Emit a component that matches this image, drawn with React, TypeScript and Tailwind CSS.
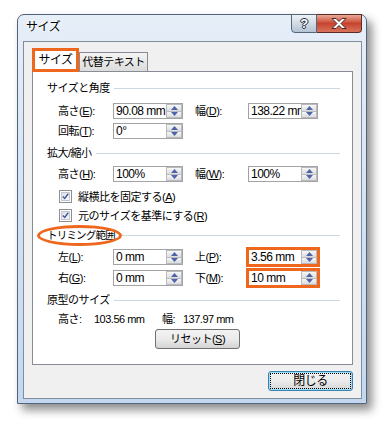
import React from 'react';

const Arrow = ({ up }: { up?: boolean }) => (
  <svg width="7" height="4" viewBox="0 0 7 4">
    <path d={up ? 'M0 4 L3.5 0 L7 4Z' : 'M0 0 L3.5 4 L7 0Z'} fill="#4f64a8" />
  </svg>
);

const Spinner = () => (
  <div className="flex h-full w-[16px] flex-col">
    <div className="flex flex-1 items-center justify-center border border-[#b8bcc2] bg-gradient-to-b from-[#f7f7f7] to-[#dcdcdc]">
      <Arrow up />
    </div>
    <div className="flex flex-1 items-center justify-center border border-t-0 border-[#b8bcc2] bg-gradient-to-b from-[#f7f7f7] to-[#dcdcdc]">
      <Arrow />
    </div>
  </div>
);

const NumBox = ({ value, highlight }: { value: string; highlight?: boolean }) => (
  <div
    className={`flex h-[16px] w-[70px] border border-[#a3a3a3] bg-white ${
      highlight ? 'outline-[3px] outline-solid outline-[#ef671c] -outline-offset-1' : ''
    }`}
  >
    <span className="flex-1 overflow-hidden whitespace-nowrap pl-[2px] text-[12px] leading-[14px]">{value}</span>
    <Spinner />
  </div>
);

const GroupHeader = ({
  title,
  children,
  titleClass = ''
}: {
  title: string;
  children?: React.ReactNode;
  titleClass?: string;
}) => (
  <div className="relative flex h-[14px] items-center pl-[14px] pr-[12px]">
    <span className={`whitespace-nowrap leading-[14px] ${titleClass}`}>{title}</span>
    <div className="ml-[4px] h-px flex-1 bg-[#cdd8e3]" />
    {children}
  </div>
);

const Row = ({
  l1,
  v1,
  l2,
  v2,
  hl,
  className = ''
}: {
  l1: React.ReactNode;
  v1: string;
  l2?: React.ReactNode;
  v2?: string;
  hl?: boolean;
  className?: string;
}) => (
  <div className={`flex h-[16px] items-center pl-[25px] ${className}`}>
    <span className="w-[55px] whitespace-nowrap leading-[14px]">{l1}</span>
    <NumBox value={v1} />
    {l2 && (
      <>
        <span className="ml-[12px] w-[53px] whitespace-nowrap leading-[14px]">{l2}</span>
        <NumBox value={v2 || ''} highlight={hl} />
      </>
    )}
  </div>
);

const Check = ({ children, className = '' }: { children: React.ReactNode; className?: string }) => (
  <div className={`flex h-[13px] items-center pl-[26px] ${className}`}>
    <div className="flex h-[13px] w-[13px] items-center justify-center border border-[#8e8f8f] bg-white">
      <div className="flex h-[9px] w-[9px] items-center justify-center border border-[#c5c9cf] bg-gradient-to-br from-[#dcdfe4] to-[#fbfbfb]">
        <svg width="9" height="9" viewBox="0 0 9 9">
          <path d="M1 4.5 L3.5 7 L8 1" stroke="#3f58a0" strokeWidth="1.8" fill="none" />
        </svg>
      </div>
    </div>
    <span className="ml-[6px] whitespace-nowrap leading-[14px]">{children}</span>
  </div>
);

export default function App() {
  return (
    <div className="min-h-[423px] w-[384px] bg-white pl-[17px] pt-[14px] font-['Liberation_Sans','Noto_Sans_CJK_JP',sans-serif] text-[11px] tracking-[-0.5px] text-black">
      <div className="flex h-[390px] w-[350px] flex-col rounded-t-[7px] border border-[#52637a] bg-gradient-to-b from-[#e6eef8] via-[#d3e2f3] to-[#c3d8f0] shadow-[5px_6px_10px_rgba(0,0,0,0.45)]">
        {/* タイトルバー */}
        <div className="flex h-[26px] items-start justify-between">
          <span className="pl-[8px] pt-[5px] text-[12px] leading-[14px] [text-shadow:0_0_6px_#fff,0_0_3px_#fff]">サイズ</span>
          <div className="-mt-px mr-[4px] flex h-[19px]">
            <div className="flex w-[26px] items-center justify-center rounded-bl-[4px] border border-[#55667b] bg-gradient-to-b from-[#eef2f7] via-[#d2dbe5] to-[#b4c3d4] text-[13px] font-bold leading-none text-white [text-shadow:0_0_1px_#253040,1px_0_0_#253040,-1px_0_0_#253040,0_1px_0_#253040,0_-1px_0_#253040]">
              ?
            </div>
            <div className="flex w-[45px] items-center justify-center rounded-br-[4px] border border-l-0 border-[#5c2b23] bg-gradient-to-b from-[#e8a898] via-[#c7432d] to-[#d8735c]">
              <svg width="16" height="11" viewBox="0 0 16 11">
                <path
                  d="M1 0.5 H5 L8 3.5 L11 0.5 H15 L10 5.5 L15 10.5 H11 L8 7.5 L5 10.5 H1 L6 5.5 Z"
                  fill="#fff"
                  stroke="#3a1a16"
                  strokeWidth="0.9"
                />
              </svg>
            </div>
          </div>
        </div>

        {/* クライアント領域 */}
        <div className="mb-[4px] ml-[5px] mr-[4px] flex flex-1 flex-col border border-[#7f8d9c] bg-[#f0f0f0] px-[8px] pt-[6px]">
          {/* タブ */}
          <div className="flex h-[23px] items-end">
            <div className="relative z-10 -mb-px flex h-[24px] w-[47px] items-center justify-center border-[3px] border-[#ef671c] bg-white text-[12px] leading-[14px]">
              サイズ
            </div>
            <div className="flex h-[19px] w-[69px] items-center justify-center whitespace-nowrap border border-b-0 border-[#898c95] bg-gradient-to-b from-[#f4f4f4] to-[#dcdcdc] leading-[14px]">
              代替テキスト
            </div>
          </div>

          {/* タブパネル */}
          <div className="flex h-[294px] flex-col border border-[#898c95] bg-white pt-[9px]">
            <GroupHeader title="サイズと角度" />
            <Row
              className="mt-[8px]"
              l1={<>高さ(<u>E</u>):</>}
              v1="90.08 mm"
              l2={<>幅(<u>D</u>):</>}
              v2="138.22 mm"
            />
            <Row className="mt-[4px]" l1={<>回転(<u>T</u>):</>} v1="0°" />

            <div className="mt-[7px]">
              <GroupHeader title="拡大/縮小" />
            </div>
            <Row
              className="mt-[6px]"
              l1={<>高さ(<u>H</u>):</>}
              v1="100%"
              l2={<>幅(<u>W</u>):</>}
              v2="100%"
            />
            <Check className="mt-[8px]">
              縦横比を固定する(<u>A</u>)
            </Check>
            <Check className="mt-[6px]">
              元のサイズを基準にする(<u>R</u>)
            </Check>

            <div className="mt-[6px]">
              <GroupHeader title="トリミング範囲" titleClass="text-[10.5px] tracking-[-0.8px]">
                <div className="absolute left-[4px] top-[-3px] h-[21px] w-[85px] rounded-[50%] border-[3px] border-[#ef671c]" />
              </GroupHeader>
            </div>
            <Row
              className="mt-[7px]"
              l1={<>左(<u>L</u>):</>}
              v1="0 mm"
              l2={<>上(<u>P</u>):</>}
              v2="3.56 mm"
              hl
            />
            <Row
              className="mt-[5px]"
              l1={<>右(<u>G</u>):</>}
              v1="0 mm"
              l2={<>下(<u>M</u>):</>}
              v2="10 mm"
              hl
            />

            <div className="mt-[7px]">
              <GroupHeader title="原型のサイズ" />
            </div>
            <div className="mt-[5px] flex h-[14px] items-center whitespace-nowrap pl-[25px] leading-[14px]">
              <span className="w-[36px]">高さ:</span>
              <span className="w-[68px]">103.56 mm</span>
              <span className="w-[21px]">幅:</span>
              <span>137.97 mm</span>
            </div>
            <div className="mt-[3px] pl-[122px]">
              <button className="flex h-[20px] w-[85px] items-center justify-center whitespace-nowrap rounded-[3px] border border-[#707070] bg-gradient-to-b from-[#f2f2f2] via-[#ebebeb] to-[#d4d4d4] leading-[14px]">
                リセット(<u>S</u>)
              </button>
            </div>
          </div>

          {/* 閉じる */}
          <div className="mt-[6px] flex justify-end">
            <button className="flex h-[20px] w-[85px] items-center justify-center rounded-[3px] border border-[#3c7fb1] bg-gradient-to-b from-[#f2f2f2] via-[#ebebeb] to-[#d6d6d6] p-px shadow-[inset_0_0_0_1px_#97e0f8]">
              <span className="flex h-full w-full items-center justify-center border border-dotted border-black text-[12px] leading-[14px]">
                閉じる
              </span>
            </button>
          </div>
        </div>
      </div>
    </div>
  );
}
